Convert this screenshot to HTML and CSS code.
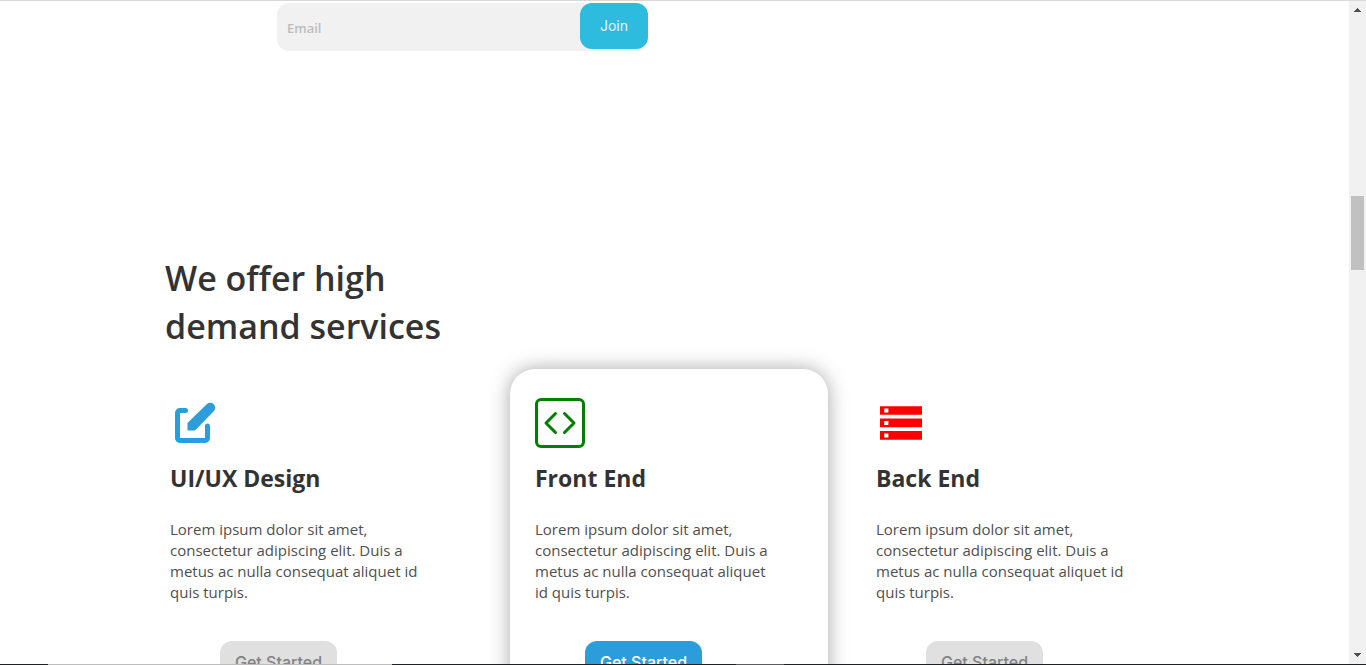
FILE: index.html
```html
<!DOCTYPE html>
<html lang="en">
<head>
<meta charset="utf-8">
<meta name="viewport" content="width=device-width, initial-scale=1">
<title>Services</title>
<link rel="stylesheet" href="styles.css">
</head>
<body>
<div class="window">
  <div class="top-edge"></div>
  <main class="page">
    <form class="signup">
      <input class="signup-email" type="email" placeholder="Email" aria-label="Email">
      <button class="signup-join" type="button">Join</button>
    </form>
    <section class="services">
      <h2 class="services-title">We offer high demand services</h2>
      <div class="cards">
        <article class="card">
          <svg class="icon" viewBox="0 0 50 50" aria-hidden="true">
            <path d="M15.500 12.500H10a2.500 2.500 0 0 0-2.500 2.500V40A2.500 2.500 0 0 0 10 42.500H35A2.500 2.500 0 0 0 37.500 40V28" fill="none" stroke="#2d9cdb" stroke-width="5" stroke-linecap="round"/>
            <path d="M17.500 32.500V25L36.700 6.300a4.900 4.900 0 0 1 7 7L25 32.500Z" fill="#2d9cdb"/>
          </svg>
          <h3 class="card-title">UI/UX Design</h3>
          <p class="card-text">Lorem ipsum dolor sit amet, consectetur adipiscing elit. Duis a metus ac nulla consequat aliquet id quis turpis.</p>
          <button class="card-button" type="button">Get Started</button>
        </article>
        <article class="card card-active">
          <svg class="icon" viewBox="0 0 50 50" aria-hidden="true">
            <g fill="none" stroke="#008000" stroke-width="3" stroke-linecap="round" stroke-linejoin="round">
              <rect x="1.500" y="1.500" width="47" height="47" rx="4.500"/>
              <path d="M20.500 15.500L11 25l9.500 9.500M29.500 15.500L39 25l-9.500 9.500"/>
            </g>
          </svg>
          <h3 class="card-title">Front End</h3>
          <p class="card-text card-text-narrow">Lorem ipsum dolor sit amet, consectetur adipiscing elit. Duis a metus ac nulla consequat aliquet id quis turpis.</p>
          <button class="card-button card-button-active" type="button">Get Started</button>
        </article>
        <article class="card">
          <svg class="icon" viewBox="0 0 50 50" aria-hidden="true">
            <path fill="#f00" fill-rule="evenodd" d="M4 8.200h42v8.600H4ZM4 20.600h42v8.700H4ZM4 33.100h42v8.700H4ZM8.200 10.400v4.200h4.200v-4.200ZM8.200 22.900v4.200h4.200v-4.200ZM8.200 35.400v4.200h4.200v-4.200Z"/>
          </svg>
          <h3 class="card-title">Back End</h3>
          <p class="card-text">Lorem ipsum dolor sit amet, consectetur adipiscing elit. Duis a metus ac nulla consequat aliquet id quis turpis.</p>
          <button class="card-button" type="button">Get Started</button>
        </article>
      </div>
    </section>
  </main>
  <div class="scrollbar" aria-hidden="true">
    <svg class="arrow" viewBox="0 0 17 17"><path d="M5 11h7v-1h-1v-1h-1v-1h-1v-1h-1v1h-1v1h-1v1h-1Z" fill="#505050"/></svg>
    <div class="track"><div class="thumb"></div></div>
    <svg class="arrow" viewBox="0 0 17 17"><path d="M5 6h7v1h-1v1h-1v1h-1v1h-1v-1h-1v-1h-1v-1h-1Z" fill="#505050"/></svg>
  </div>
  <div class="bottom-edge"></div>
</div>
</body>
</html>
```
FILE: styles.css
```css
* { box-sizing: border-box; }

body {
  margin: 0;
  background: #fff;
  color: #333;
  font-family: "Open Sans", "Noto Sans", sans-serif;
}

.window {
  display: grid;
  grid-template: 1px minmax(0, 1fr) 1px / minmax(0, 1fr) 17px;
  height: 100vh;
}

.top-edge, .bottom-edge { grid-column: 1 / -1; }
.top-edge { background: #d9d9d9; }
.bottom-edge {
  background: linear-gradient(90deg, #202124 48px, #bdbdbd 48px, #bdbdbd 392px, #202124 392px, #202124 736px, #5c5c5f 736px, #5c5c5f 784px, #202124 784px);
}

.page {
  overflow: hidden;
  padding-top: 2px;
}

.signup {
  display: flex;
  align-items: flex-start;
  width: 371px;
  height: 48px;
  margin-left: 277px;
  border-radius: 12px;
  background: #f1f1f1;
}

.signup-email {
  flex: 1;
  min-width: 0;
  height: 50px;
  padding: 0 10px;
  border: 0;
  background: none;
  font: 600 13px "Open Sans", sans-serif;
}
.signup-email::placeholder { color: #bdbdbd; opacity: 1; }

.signup-join {
  width: 68px;
  height: 46px;
  padding: 0 0 2px;
  border: 0;
  border-radius: 12px;
  background: #2dbcde;
  color: #f2f2f2;
  font: 14px Inter, sans-serif;
}

.services { padding-top: 203px; }

.services-title {
  width: 320px;
  margin: 0 0 19px 165px;
  font-size: 34px;
  font-weight: 600;
  line-height: 48px;
}

.cards {
  display: grid;
  grid-template-columns: 365fr 341fr 498fr;
  margin-left: 145px;
}

.card {
  width: 318px;
  padding: 29px 25px;
  border-radius: 25px;
}
.card-active { box-shadow: 0 0 20px rgba(0, 0, 0, 0.35); }

.icon {
  display: block;
  width: 50px;
  height: 50px;
}

.card-title {
  margin: 13px 0 24px;
  font-size: 23px;
  font-weight: 700;
  line-height: 34px;
}

.card-text {
  width: 260px;
  margin: 0 0 38px;
  color: #4f4f4f;
  font-size: 15px;
  line-height: 21px;
}
.card-text-narrow { width: 244px; }

.card-button {
  display: block;
  width: 117px;
  height: 42px;
  margin-left: 50px;
  padding: 0;
  border: 0;
  border-radius: 12px;
  background: #e0e0e0;
  color: #828282;
  font: 500 16px Inter, sans-serif;
}
.card-button-active { background: #2d9cdb; color: #fff; }

.scrollbar {
  display: flex;
  flex-direction: column;
  background: #f1f1f1;
}
.arrow { width: 17px; height: 17px; }
.track { flex: 1; padding: 178px 2px 0; }
.thumb { height: 74px; background: #c1c1c1; }
```
